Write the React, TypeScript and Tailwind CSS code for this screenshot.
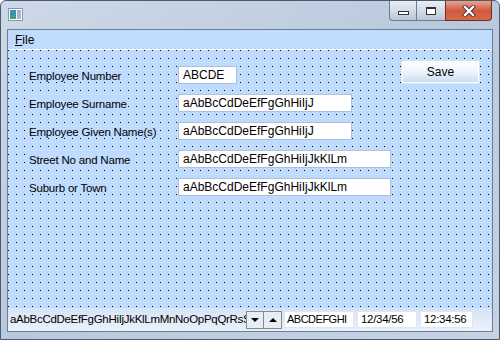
import React from "react";

const font = "font-['Liberation_Sans',Arial,sans-serif]";

const fields = [
  { label: "Employee Number", value: "ABCDE", w: "w-[59px]" },
  { label: "Employee Surname", value: "aAbBcCdDeEfFgGhHiIjJ", w: "w-[174px]" },
  { label: "Employee Given Name(s)", value: "aAbBcCdDeEfFgGhHiIjJ", w: "w-[174px]" },
  { label: "Street No and Name", value: "aAbBcCdDeEfFgGhHiIjJkKlLm", w: "w-[213px]" },
  { label: "Suburb or Town", value: "aAbBcCdDeEfFgGhHiIjJkKlLm", w: "w-[213px]" },
];

const TitleButtons = () => (
  <div className="flex h-[20px]">
    <div className="w-[28px] rounded-bl-[4px] border border-t-0 border-[#6d7b8f] bg-gradient-to-b from-[#e9eef5] via-[#d3dce8] to-[#b9c7d8] flex items-center justify-center">
      <div className="w-[11px] h-[4px] border border-[#333] bg-white mt-[5px]" />
    </div>
    <div className="w-[28px] border-b border-[#6d7b8f] bg-gradient-to-b from-[#e9eef5] via-[#d3dce8] to-[#b9c7d8] flex items-center justify-center">
      <div className="w-[10px] h-[8px] border border-t-2 border-[#333] bg-white" />
    </div>
    <div className="w-[47px] rounded-br-[4px] border border-t-0 border-[#7a2a1c] bg-gradient-to-b from-[#e8a493] via-[#cf5b40] to-[#d8684a] flex items-center justify-center">
      <svg width="14" height="12" viewBox="0 0 14 12">
        <path d="M3 2 L11 10 M11 2 L3 10" stroke="#3a2a2a" strokeWidth="4" strokeLinecap="square" />
        <path d="M3 2 L11 10 M11 2 L3 10" stroke="#ffffff" strokeWidth="2.4" strokeLinecap="square" />
      </svg>
    </div>
  </div>
);

const App = () => {
  return (
    <div className={`${font} w-[500px] h-[340px] overflow-hidden`}>
      <div className="w-full h-full flex flex-col rounded-t-[6px] border border-[#4b5a6e] bg-gradient-to-br from-[#cdd9e8] via-[#b9c9dd] to-[#c5d3e4] px-[6px] pb-[7px]">
        <div className="h-[28px] flex items-start justify-between">
          <div className="mt-[7px] ml-[1px] w-[15px] h-[13px] border border-[#8795a8] bg-white p-[1px] flex gap-[1px]">
            <div className="w-[7px] h-full bg-gradient-to-b from-[#3c8ad0] to-[#4da05a]" />
            <div className="w-[4px] h-full bg-[#9fb6cc]" />
          </div>
          <div className="mr-[1px]">
            <TitleButtons />
          </div>
        </div>
        <div className="flex-1 flex flex-col border border-[#6f7d90] bg-[#bfdbfe]">
          <div className="h-[20px] border-b border-white flex items-center pl-[7px] text-[12px] text-black">
            <span>
              <span className="underline">F</span>ile
            </span>
          </div>
          <div className="flex-1 flex justify-between bg-[#bfdbfe] bg-[conic-gradient(at_1px_1px,transparent_270deg,#000_0)] bg-size-[8px_8px]">
            <div className="pl-[21px] pt-[16px] flex flex-col gap-[10px]">
              {fields.map((f) => (
                <div key={f.label} className="flex items-center h-[18px] text-black">
                  <div className="w-[149px]">
                    <span className="bg-[#bfdbfe] text-[11.5px] tracking-[-0.2px] leading-[14px]">{f.label}</span>
                  </div>
                  <div className={`${f.w} h-[18px] border border-[#a9c0de] bg-white px-[4px] flex items-center text-[12px]`}>
                    {f.value}
                  </div>
                </div>
              ))}
            </div>
            <div className="pt-[9px] pr-[12px]">
              <button className="w-[79px] h-[24px] rounded-[2px] border border-[#d8e6f6] bg-gradient-to-b from-white via-[#eef4fc] to-[#c8daf2] text-[12px] text-black shadow-[inset_0_0_0_1px_#ffffff]">
                Save
              </button>
            </div>
          </div>
          <div className="h-[23px] flex items-center gap-[2px] bg-gradient-to-b from-[#d3e3f6] via-[#e1ebf7] to-[#eaf1fa] text-[11.5px] tracking-[-0.3px] text-black">
            <div className="w-[238px] pl-[2px] overflow-hidden whitespace-nowrap">
              aAbBcCdDeEfFgGhHiIjJkKlLmMnNoOpPqQrRsSt
            </div>
            <div className="flex -ml-[2px]">
              <div className="w-[18px] h-[18px] border border-[#8a8a8a] bg-[#e6edf6] flex items-center justify-center">
                <div className="w-0 h-0 border-x-[4px] border-x-transparent border-t-[4px] border-t-black" />
              </div>
              <div className="w-[18px] h-[18px] border border-l-0 border-[#8a8a8a] bg-[#e6edf6] flex items-center justify-center">
                <div className="w-0 h-0 border-x-[4px] border-x-transparent border-b-[4px] border-b-black" />
              </div>
            </div>
            <div className="w-[70px] h-[17px] bg-white border border-[#dde6f1] px-[2px] flex items-center whitespace-nowrap text-[11px] tracking-[-0.5px]">ABCDEFGHI</div>
            <div className="w-[60px] h-[17px] bg-white border border-[#dde6f1] ml-[1px] px-[3px] flex items-center whitespace-nowrap">12/34/56</div>
            <div className="w-[53px] h-[17px] bg-white border border-[#dde6f1] ml-[1px] px-[3px] flex items-center whitespace-nowrap">12:34:56</div>
          </div>
        </div>
      </div>
    </div>
  );
};

export default App;
